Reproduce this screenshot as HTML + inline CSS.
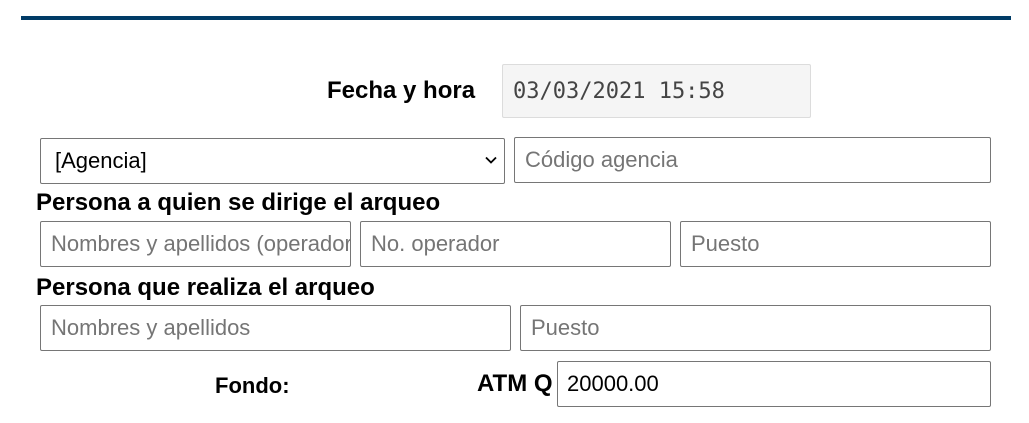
<!DOCTYPE html>
<html><head><style>
body{margin:0;width:1029px;height:423px;background:#fff;font-family:"Liberation Sans",Arial,sans-serif;position:relative;overflow:hidden}
.a{position:absolute;box-sizing:border-box}
.bar{left:21px;top:16px;width:990px;height:4px;background:#003b66}
.in{border:1px solid #767676;border-radius:2px;font-size:22px;color:#757575;padding-left:10px;line-height:44px;white-space:nowrap;overflow:hidden;height:46px}
.lb{font-weight:bold;font-size:24px;color:#000;white-space:nowrap}
</style></head><body>
<div class="a bar"></div>
<div class="a lb" style="left:327px;top:77px">Fecha y hora</div>
<div class="a" style="left:502px;top:64px;width:309px;height:54px;background:#f5f5f5;border:1px solid #dcdcdc;border-radius:2px;font-family:'DejaVu Sans Mono','Liberation Mono',monospace;font-size:22px;color:#444;padding-left:10px;line-height:54px">03/03/2021 15:58</div>
<div class="a in" style="left:40px;top:138px;width:465px;color:#000;padding-left:14px">[Agencia]
<svg style="position:absolute;right:7px;top:17px" width="12" height="8" viewBox="0 0 12 8"><path d="M1 1.5L6 6.5L11 1.5" stroke="#000" stroke-width="1.8" fill="none"/></svg></div>
<div class="a in" style="left:514px;top:137px;width:477px">Código agencia</div>
<div class="a lb" style="left:36px;top:189px">Persona a quien se dirige el arqueo</div>
<div class="a in" style="left:40px;top:221px;width:311px">Nombres y apellidos (operador)</div>
<div class="a in" style="left:360px;top:221px;width:311px">No. operador</div>
<div class="a in" style="left:680px;top:221px;width:311px">Puesto</div>
<div class="a lb" style="left:36px;top:274px">Persona que realiza el arqueo</div>
<div class="a in" style="left:40px;top:305px;width:471px">Nombres y apellidos</div>
<div class="a in" style="left:520px;top:305px;width:471px">Puesto</div>
<div class="a lb" style="left:215px;top:373px;font-size:22px">Fondo:</div>
<div class="a lb" style="left:477px;top:370px">ATM Q</div>
<div class="a in" style="left:557px;top:361px;width:434px;color:#000;padding-left:9px">20000.00</div>
</body></html>
